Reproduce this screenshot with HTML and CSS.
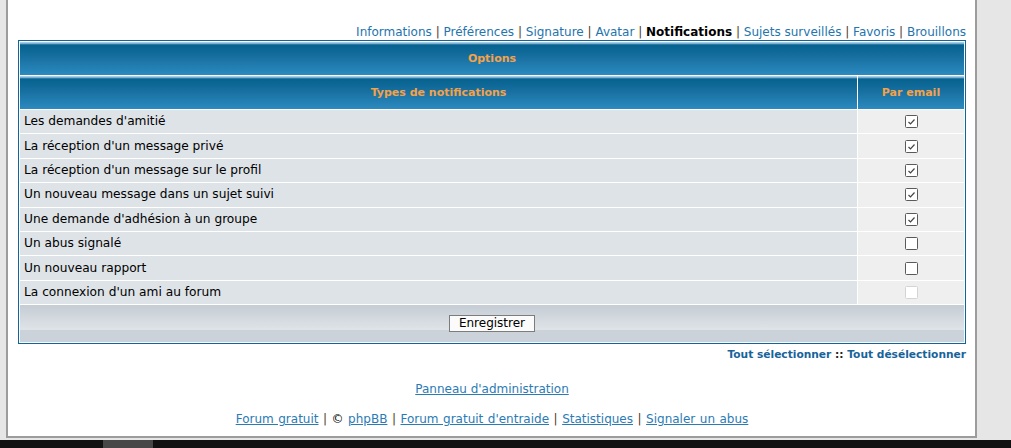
FILE: index.html
```html
<!DOCTYPE html>
<html lang="fr">
<head>
    <meta charset="UTF-8">
    <title>Notifications</title>
    <link rel="stylesheet" href="styles.css">
</head>
<body>
    <div class="page">
        <div class="nav">
            <a href="#">Informations</a> <span class="sep">|</span>
            <a href="#">Préférences</a> <span class="sep">|</span>
            <a href="#">Signature</a> <span class="sep">|</span>
            <a href="#">Avatar</a> <span class="sep">|</span>
            <strong>Notifications</strong> <span class="sep">|</span>
            <a href="#">Sujets surveillés</a> <span class="sep">|</span>
            <a href="#">Favoris</a> <span class="sep">|</span>
            <a href="#">Brouillons</a>
        </div>

        <table class="forumline">
            <tr>
                <th class="thHead" colspan="2">Options</th>
            </tr>
            <tr>
                <th class="thHead">Types de notifications</th>
                <th class="thHead email">Par email</th>
            </tr>
            <tr>
                <td class="row1">Les demandes d'amitié</td>
                <td class="row2"><span class="box"><svg width="13" height="13" viewBox="0 0 13 13"><rect x="0.5" y="0.5" width="12" height="12" rx="1" fill="#fff" stroke="#5a5a5a"/><path d="M3.5 7 L5.5 9 L9.5 4.5" fill="none" stroke="#444" stroke-width="1.2"/></svg></span></td>
            </tr>
            <tr>
                <td class="row1">La réception d'un message privé</td>
                <td class="row2"><span class="box"><svg width="13" height="13" viewBox="0 0 13 13"><rect x="0.5" y="0.5" width="12" height="12" rx="1" fill="#fff" stroke="#5a5a5a"/><path d="M3.5 7 L5.5 9 L9.5 4.5" fill="none" stroke="#444" stroke-width="1.2"/></svg></span></td>
            </tr>
            <tr>
                <td class="row1">La réception d'un message sur le profil</td>
                <td class="row2"><span class="box"><svg width="13" height="13" viewBox="0 0 13 13"><rect x="0.5" y="0.5" width="12" height="12" rx="1" fill="#fff" stroke="#5a5a5a"/><path d="M3.5 7 L5.5 9 L9.5 4.5" fill="none" stroke="#444" stroke-width="1.2"/></svg></span></td>
            </tr>
            <tr>
                <td class="row1">Un nouveau message dans un sujet suivi</td>
                <td class="row2"><span class="box"><svg width="13" height="13" viewBox="0 0 13 13"><rect x="0.5" y="0.5" width="12" height="12" rx="1" fill="#fff" stroke="#5a5a5a"/><path d="M3.5 7 L5.5 9 L9.5 4.5" fill="none" stroke="#444" stroke-width="1.2"/></svg></span></td>
            </tr>
            <tr>
                <td class="row1">Une demande d'adhésion à un groupe</td>
                <td class="row2"><span class="box"><svg width="13" height="13" viewBox="0 0 13 13"><rect x="0.5" y="0.5" width="12" height="12" rx="1" fill="#fff" stroke="#5a5a5a"/><path d="M3.5 7 L5.5 9 L9.5 4.5" fill="none" stroke="#444" stroke-width="1.2"/></svg></span></td>
            </tr>
            <tr>
                <td class="row1">Un abus signalé</td>
                <td class="row2"><span class="box"><svg width="13" height="13" viewBox="0 0 13 13"><rect x="0.5" y="0.5" width="12" height="12" rx="1" fill="#fff" stroke="#5a5a5a"/></svg></span></td>
            </tr>
            <tr>
                <td class="row1">Un nouveau rapport</td>
                <td class="row2"><span class="box"><svg width="13" height="13" viewBox="0 0 13 13"><rect x="0.5" y="0.5" width="12" height="12" rx="1" fill="#fff" stroke="#5a5a5a"/></svg></span></td>
            </tr>
            <tr>
                <td class="row1">La connexion d'un ami au forum</td>
                <td class="row2"><span class="box"><svg width="13" height="13" viewBox="0 0 13 13"><rect x="0.5" y="0.5" width="12" height="12" rx="1" fill="#fff" stroke="#d4d4d4"/></svg></span></td>
            </tr>
            <tr>
                <td class="catBottom" colspan="2"><button class="button">Enregistrer</button></td>
            </tr>
        </table>

        <div class="select-links">
            <a href="#">Tout sélectionner</a> :: <a href="#">Tout désélectionner</a>
        </div>

        <div class="admin"><a href="#">Panneau d'administration</a></div>

        <div class="copyright">
            <a href="#">Forum gratuit</a> <span class="sep">|</span> © <a href="#">phpBB</a> <span class="sep">|</span>
            <a href="#">Forum gratuit d'entraide</a> <span class="sep">|</span>
            <a href="#">Statistiques</a> <span class="sep">|</span>
            <a href="#">Signaler un abus</a>
        </div>
    </div>
    <div class="taskbar"><span class="task"></span></div>
</body>
</html>
```

FILE: styles.css
```css
body {
    margin: 0;
    background-color: #e6e6e6;
    font-family: "DejaVu Sans", Verdana, sans-serif;
    font-size: 12px;
    color: #000000;
}
a {
    color: #1d6ea6;
    text-decoration: none;
}
.page {
    box-sizing: border-box;
    width: 971px;
    height: 438px;
    margin-left: 6px;
    padding: 24px 9px 0 10px;
    background-color: #ffffff;
    border: 2px solid #9c9c9c;
    border-top: 0;
}
.nav {
    text-align: right;
    line-height: 16px;
    font-size: 12px;
}
.nav a {
    color: #2474ad;
}
.nav strong {
    color: #000000;
}
.sep {
    color: #4a3a2a;
}
.forumline {
    width: 948px;
    border: 1px solid #0d679c;
    border-spacing: 1px;
    background-color: #ffffff;
    padding: 0;
}
.thHead {
    height: 33px;
    padding: 0;
    color: #f4a24a;
    font-size: 11px;
    font-weight: bold;
    background: linear-gradient(to bottom, #a9cde2 0, #a9cde2 1px, #4d93bf 2px, #06628f 3px, #176f9f 45%, #2c8ac0 100%);
}
.thHead.email {
    width: 106px;
}
.row1, .row2 {
    box-sizing: border-box;
    height: 23.4px;
    padding: 0 4px;
    line-height: 15px;
    font-size: 12.2px;
}
.row1 {
    background-color: #dee3e7;
}
.row2 {
    background-color: #efefef;
    text-align: center;
}
.box {
    display: inline-block;
    width: 13px;
    height: 13px;
    vertical-align: middle;
}
.box svg {
    display: block;
}
.catBottom {
    height: 37px;
    padding: 0;
    text-align: center;
    vertical-align: top;
    background: linear-gradient(to bottom, #c5ccd4 0, #dfe4e8 68%, #cbd2da 68%, #cbd2da 100%);
}
.button {
    margin-top: 10px;
    width: 86px;
    height: 17px;
    padding: 0;
    font-family: "DejaVu Sans", Verdana, sans-serif;
    font-size: 12px;
    line-height: 15px;
    color: #000000;
    background-color: #fbfbfb;
    border: 1px solid #7c7c7c;
}
.select-links {
    margin-top: 4px;
    text-align: right;
    line-height: 14px;
    font-size: 10.65px;
    font-weight: bold;
    color: #222222;
}
.select-links a {
    color: #17639a;
}
.admin {
    margin-top: 19px;
    text-align: center;
    line-height: 16px;
    font-size: 12px;
}
.admin a, .copyright a {
    color: #2a7bb5;
    text-decoration: underline;
}
.copyright {
    margin-top: 14px;
    text-align: center;
    line-height: 16px;
    font-size: 12px;
    word-spacing: 0.7px;
}
.taskbar {
    margin-top: 2px;
    height: 8px;
    background-color: #111111;
    overflow: hidden;
}
.task {
    display: block;
    width: 50px;
    height: 8px;
    margin-left: 103px;
    background-color: #474747;
}
```
